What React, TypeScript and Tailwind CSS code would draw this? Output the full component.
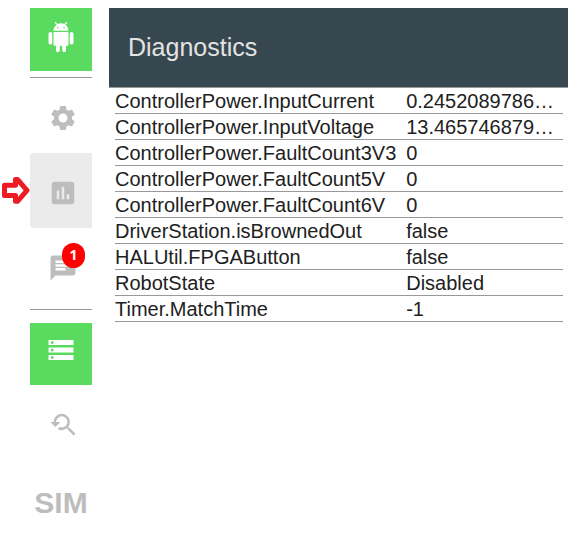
import React from 'react';
import { MdAssessment, MdChat, MdSettings, MdStorage, MdYoutubeSearchedFor } from 'react-icons/md';

const diagnostics: [string, string][] = [
  ['ControllerPower.InputCurrent', '0.2452089786…'],
  ['ControllerPower.InputVoltage', '13.465746879…'],
  ['ControllerPower.FaultCount3V3', '0'],
  ['ControllerPower.FaultCount5V', '0'],
  ['ControllerPower.FaultCount6V', '0'],
  ['DriverStation.isBrownedOut', 'false'],
  ['HALUtil.FPGAButton', 'false'],
  ['RobotState', 'Disabled'],
  ['Timer.MatchTime', '-1'],
];

function AndroidIcon() {
  return (
    <svg viewBox="0 0 24 24" fill="currentColor" className="size-[30px]" aria-hidden="true">
      <path d="M6 18c0 .55.45 1 1 1h1v3.5c0 .83.67 1.5 1.5 1.5s1.5-.67 1.5-1.5V19h2v3.5c0 .83.67 1.5 1.5 1.5s1.5-.67 1.5-1.5V19h1c.55 0 1-.45 1-1V8H6v10zM3.5 8C2.67 8 2 8.67 2 9.5v7c0 .83.67 1.5 1.5 1.5S5 17.33 5 16.5v-7C5 8.67 4.33 8 3.5 8zm17 0c-.83 0-1.5.67-1.5 1.5v7c0 .83.67 1.5 1.5 1.5s1.5-.67 1.5-1.5v-7c0-.83-.67-1.5-1.5-1.5zm-4.97-5.84l1.3-1.3c.2-.2.2-.51 0-.71-.2-.2-.51-.2-.71 0l-1.48 1.48C13.85 1.23 12.95 1 12 1c-.96 0-1.86.23-2.66.63L7.85.15c-.2-.2-.51-.2-.71 0-.2.2-.2.51 0 .71l1.31 1.31C6.97 3.26 6 5.01 6 7h12c0-1.99-.97-3.75-2.47-4.84zM10 5H9V4h1v1zm5 0h-1V4h1v1z" />
    </svg>
  );
}

function PointerArrow() {
  return (
    <svg viewBox="0 0 28 28" className="absolute top-6 -left-7 size-7" aria-hidden="true">
      <path
        d="M2.5 8.2H13.5V2.5H15.5L25 13.3L15.5 24.3H13.5V18.4H2.5Z"
        fill="#fff"
        stroke="#ed1c24"
        strokeWidth="5"
        strokeLinejoin="round"
      />
    </svg>
  );
}

export default function App() {
  return (
    <div className="flex bg-white pt-2 pr-[7px] pl-[30px] font-['Liberation_Sans',Arial,sans-serif]">
      <nav className="flex w-[62px] shrink-0 flex-col text-[#bdbdbd]" aria-label="Main">
        <button
          type="button"
          aria-label="Robot"
          className="flex h-[63px] items-center justify-center bg-[#5adb5f] pb-1.5 text-white"
        >
          <AndroidIcon />
        </button>
        <hr className="mt-1.5 border-[#999]" />
        <button type="button" aria-label="Settings" className="flex h-[75px] items-center justify-center pt-1 pl-1">
          <MdSettings className="size-[30px]" />
        </button>
        <div className="relative">
          <PointerArrow />
          <button
            type="button"
            aria-label="Diagnostics"
            className="flex h-[75px] w-full items-center justify-center rounded-l bg-[#ebebeb] pt-1 pl-1"
          >
            <MdAssessment className="size-[30px]" />
          </button>
        </div>
        <button type="button" aria-label="Messages" className="flex h-[75px] items-center justify-center pt-1 pl-1">
          <span className="relative">
            <MdChat className="size-[30px]" />
            <span className="absolute -top-2.5 -right-[7px] flex h-[25px] w-[23px] items-center justify-center rounded-full bg-[#f00] font-['Noto_Sans',sans-serif] text-sm font-bold text-white">
              1
            </span>
          </span>
        </button>
        <hr className="mt-1.5 border-[#999]" />
        <button
          type="button"
          aria-label="Storage"
          className="mt-[13px] flex h-[62px] items-center justify-center bg-[#5adb5f] pb-2 text-white"
        >
          <MdStorage className="size-[30px]" />
        </button>
        <button type="button" aria-label="Replay" className="flex h-[75px] items-center justify-center pt-1 pl-1">
          <MdYoutubeSearchedFor className="size-[30px]" />
        </button>
        <button type="button" className="flex h-[84px] items-center justify-center text-[30px] font-bold">
          SIM
        </button>
      </nav>
      <main className="ml-[17px] min-w-0 flex-1">
        <header className="border-b border-[#999] bg-[#37474f] px-[19px] py-6 text-[#e3e3e3]">
          <h1 className="text-[25px] leading-[31px]">Diagnostics</h1>
        </header>
        <div className="pr-[5px] pl-1.5">
          <table className="w-full table-fixed text-xl leading-6 text-[#212121]">
            <colgroup>
              <col className="w-[65%]" />
              <col className="w-[35%]" />
            </colgroup>
            <tbody>
              {diagnostics.map(([name, value]) => (
                <tr key={name} className="border-b border-[#999]">
                  <th scope="row" className="p-0 pt-px text-left font-normal whitespace-nowrap">
                    {name}
                  </th>
                  <td className="truncate p-0 pt-px">{value}</td>
                </tr>
              ))}
            </tbody>
          </table>
        </div>
      </main>
    </div>
  );
}
